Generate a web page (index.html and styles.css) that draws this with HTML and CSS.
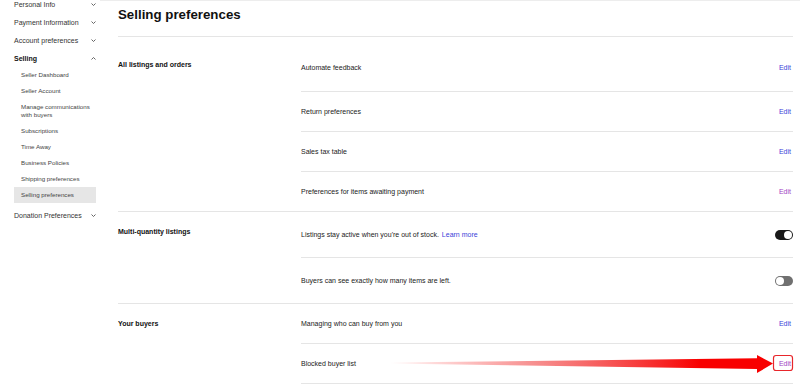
FILE: index.html
```html
<!DOCTYPE html>
<html lang="en">
<head>
<meta charset="utf-8">
<title>Selling preferences</title>
<link rel="stylesheet" href="styles.css">
</head>
<body>
<div class="page">
  <aside class="sidebar">
    <ul class="nav">
      <li class="nav-item"><span>Personal Info</span><svg class="chev" viewBox="0 0 5 3"><polyline points="0.5,0.5 2.5,2.5 4.5,0.5"/></svg></li>
      <li class="nav-item"><span>Payment Information</span><svg class="chev" viewBox="0 0 5 3"><polyline points="0.5,0.5 2.5,2.5 4.5,0.5"/></svg></li>
      <li class="nav-item"><span>Account preferences</span><svg class="chev" viewBox="0 0 5 3"><polyline points="0.5,0.5 2.5,2.5 4.5,0.5"/></svg></li>
      <li class="nav-item active"><span>Selling</span><svg class="chev" viewBox="0 0 5 3"><polyline points="0.5,2.5 2.5,0.5 4.5,2.5"/></svg></li>
      <li>
        <ul class="subnav">
          <li>Seller Dashboard</li>
          <li>Seller Account</li>
          <li>Manage communications with buyers</li>
          <li>Subscriptions</li>
          <li>Time Away</li>
          <li>Business Policies</li>
          <li>Shipping preferences</li>
          <li class="current">Selling preferences</li>
        </ul>
      </li>
      <li class="nav-item"><span>Donation Preferences</span><svg class="chev" viewBox="0 0 5 3"><polyline points="0.5,0.5 2.5,2.5 4.5,0.5"/></svg></li>
    </ul>
  </aside>

  <main class="main">
    <header class="title-bar"><h1>Selling preferences</h1></header>

    <section class="section first">
      <h2 class="section-label">All listings and orders</h2>
      <div class="rows">
        <div class="row tall"><span>Automate feedback</span><a class="edit" href="#">Edit</a></div>
        <div class="row"><span>Return preferences</span><a class="edit" href="#">Edit</a></div>
        <div class="row"><span>Sales tax table</span><a class="edit" href="#">Edit</a></div>
        <div class="row"><span>Preferences for items awaiting payment</span><a class="edit visited" href="#">Edit</a></div>
      </div>
    </section>

    <section class="section">
      <h2 class="section-label">Multi-quantity listings</h2>
      <div class="rows">
        <div class="row toggle-row"><span>Listings stay active when you're out of stock. <a class="link" href="#">Learn more</a></span><span class="switch on"><span class="knob"></span></span></div>
        <div class="row toggle-row"><span>Buyers can see exactly how many items are left.</span><span class="switch off"><span class="knob"></span></span></div>
      </div>
    </section>

    <section class="section">
      <h2 class="section-label">Your buyers</h2>
      <div class="rows last">
        <div class="row"><span>Managing who can buy from you</span><a class="edit" href="#">Edit</a></div>
        <div class="row"><span>Blocked buyer list</span><a class="edit visited" href="#">Edit</a></div>
      </div>
    </section>
  </main>
</div>

<svg class="annotation" viewBox="0 0 800 388" width="800" height="388">
  <defs>
    <linearGradient id="arrowGrad" gradientUnits="userSpaceOnUse" x1="390" y1="0" x2="700" y2="0">
      <stop offset="0" stop-color="#ff2020" stop-opacity="0"/>
      <stop offset="0.45" stop-color="#f03a3a" stop-opacity="0.55"/>
      <stop offset="1" stop-color="#f80000" stop-opacity="1"/>
    </linearGradient>
  </defs>
  <polygon points="388,362.6 757,358.2 757,355 773,363.6 757,373 757,369 388,363.4" fill="url(#arrowGrad)"/>
  <rect x="773.5" y="355.5" width="19" height="15" rx="2.5" fill="none" stroke="#e8262b" stroke-width="1.2"/>
</svg>
</body>
</html>
```

FILE: styles.css
```css
body {
  margin: 0;
  font-family: "Liberation Sans", Arial, sans-serif;
  color: #222;
  background: #fff;
  overflow: hidden;
}

.page {
  display: flex;
  align-items: flex-start;
}

/* Sidebar */
.sidebar {
  width: 100px;
  flex: none;
  padding-left: 14px;
  box-sizing: border-box;
}

.nav {
  list-style: none;
  margin: -5px 0 0;
  padding: 0;
  width: 83px;
}

.nav-item {
  display: flex;
  justify-content: space-between;
  align-items: center;
  height: 18px;
  font-size: 7px;
  color: #333;
}

.nav-item.active {
  font-weight: bold;
  color: #111;
}

.chev {
  width: 5px;
  height: 3px;
  margin-right: 1px;
  fill: none;
  stroke: #555;
  stroke-width: 0.9;
}

.subnav {
  list-style: none;
  margin: 0 0 3px;
  padding: 0;
  width: 82px;
}

.subnav li {
  padding: 4px 3px 4px 7px;
  line-height: 8px;
  font-size: 6.2px;
  color: #444;
}

.subnav li.current {
  background: #e6e6e6;
}

/* Main */
.main {
  flex: 1;
  padding: 0 7px 0 18px;
  border-top: 1px solid #ededed;
}

.title-bar {
  padding: 6px 0 14px;
  border-bottom: 1px solid #e5e5e5;
}

.title-bar h1 {
  margin: 0;
  font-size: 13.3px;
  line-height: 15px;
  font-weight: bold;
  color: #111;
}

.section {
  display: grid;
  grid-template-columns: 183px 1fr;
  border-top: 1px solid #e5e5e5;
}

.section.first {
  border-top: 0;
  padding-top: 8px;
}

.section-label {
  margin: 0;
  padding-top: 15px;
  font-size: 7px;
  line-height: 10px;
  font-weight: bold;
  color: #111;
}

.rows.last {
  border-bottom: 1px solid #e5e5e5;
}

.row {
  display: flex;
  align-items: center;
  justify-content: space-between;
  height: 39px;
  font-size: 7px;
  line-height: 10px;
  color: #222;
}

.row + .row {
  border-top: 1px solid #e5e5e5;
}

.row.tall {
  height: 46px;
}

.row.toggle-row {
  height: 45px;
}

.edit {
  color: #3b3fd9;
  text-decoration: none;
  margin-right: 2px;
}

.edit.visited {
  color: #a23fc4;
}

.link {
  color: #3b3fd9;
  text-decoration: none;
  margin-left: 1px;
}

.switch {
  display: flex;
  align-items: center;
  width: 18px;
  height: 10px;
  padding: 1px;
  box-sizing: border-box;
  border-radius: 5px;
}

.switch.on {
  background: #191919;
  justify-content: flex-end;
}

.switch.off {
  background: #707070;
  justify-content: flex-start;
}

.knob {
  width: 8px;
  height: 8px;
  border-radius: 50%;
  background: #fff;
}

/* Annotation overlay */
.annotation {
  position: absolute;
  top: 0;
  left: 0;
  pointer-events: none;
}
```
